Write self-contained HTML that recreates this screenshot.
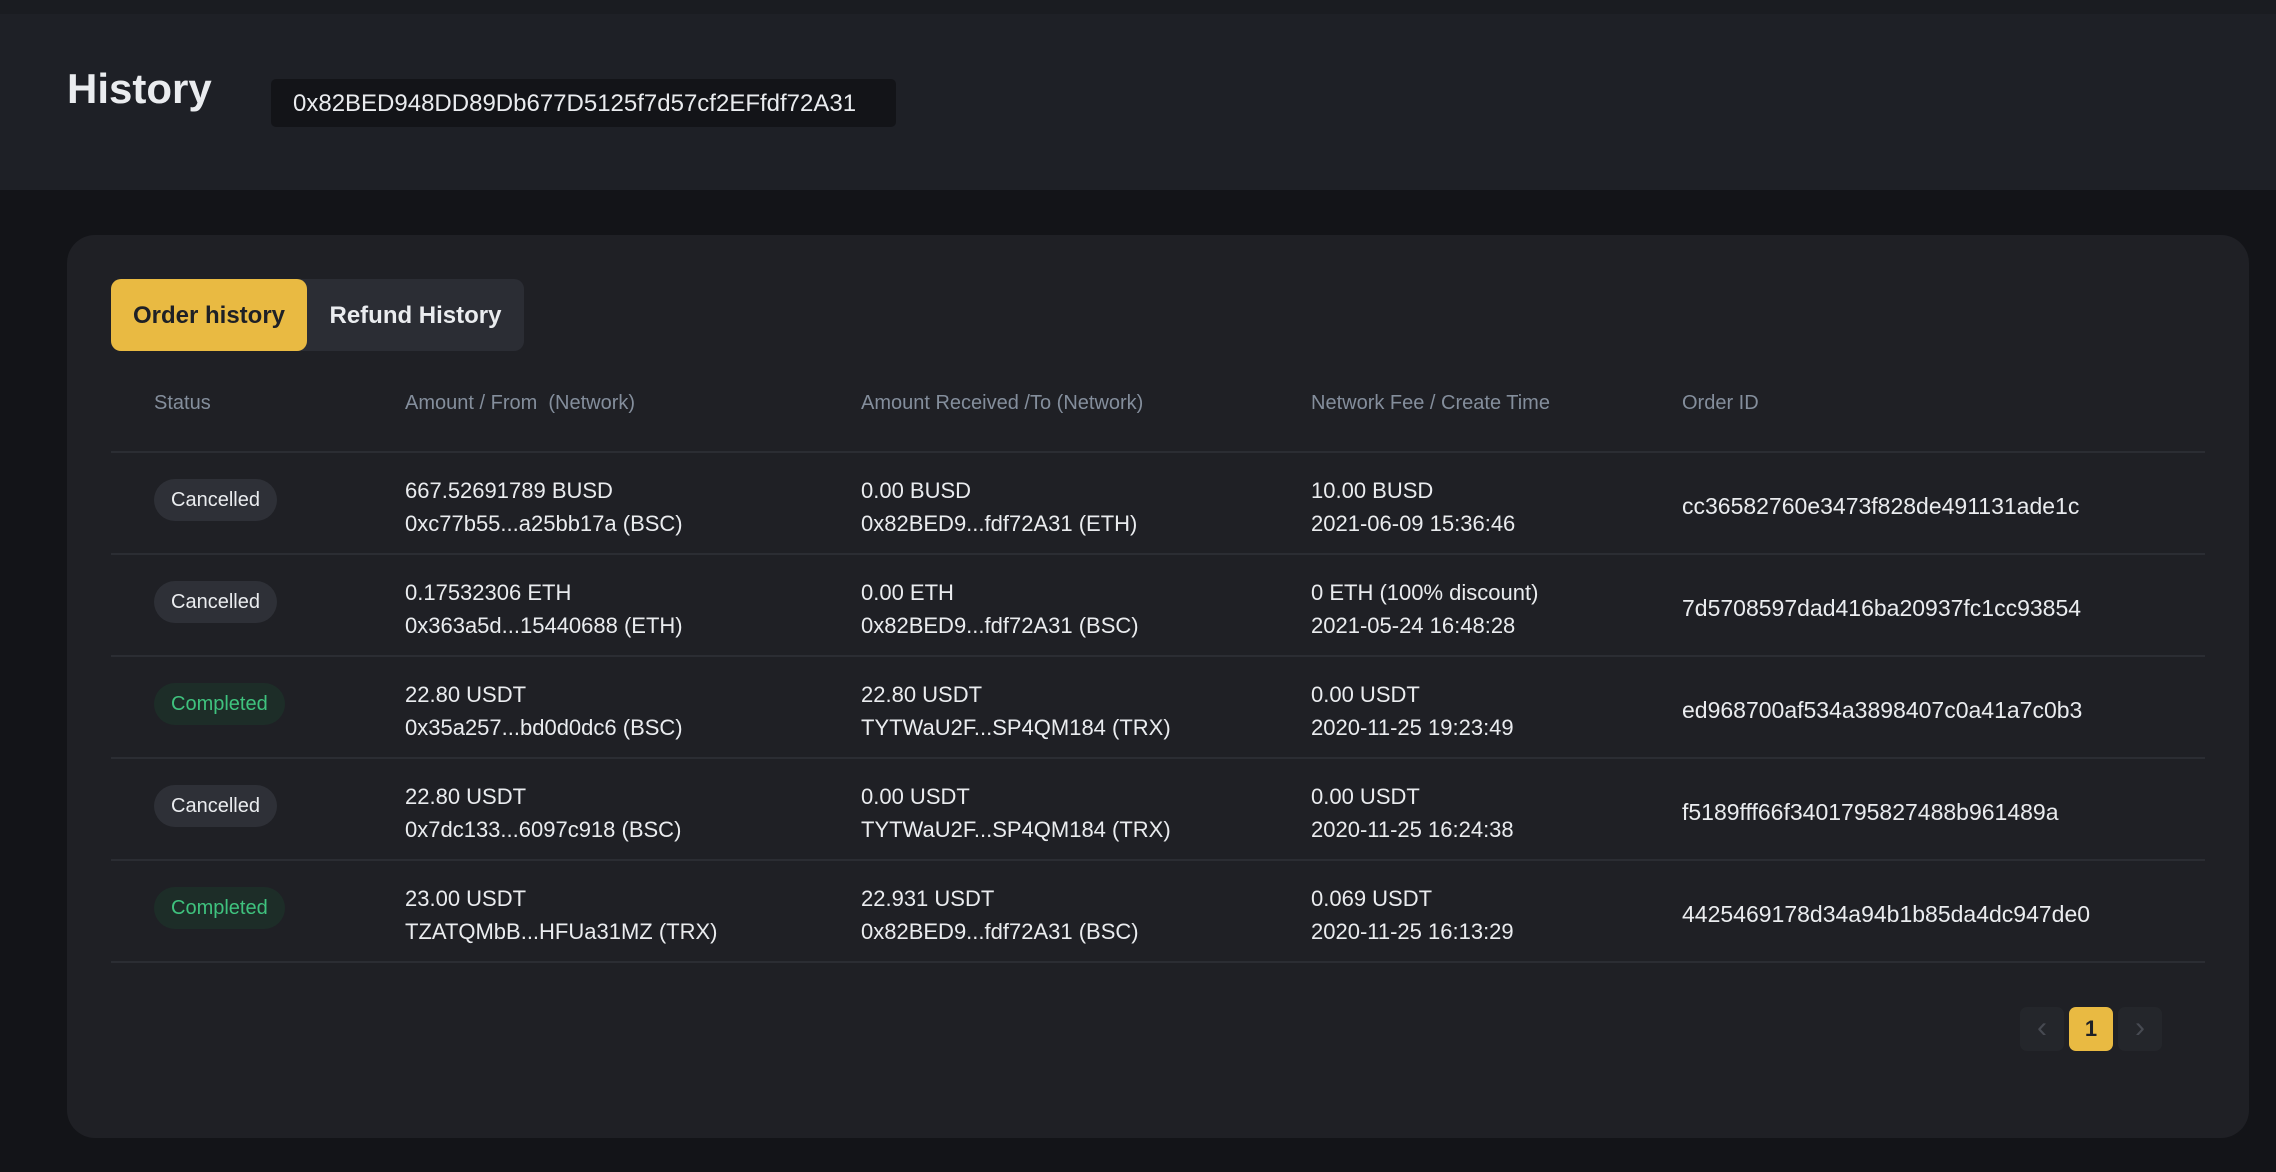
<!DOCTYPE html>
<html><head><meta charset="utf-8">
<style>
*{margin:0;padding:0;box-sizing:border-box}
html,body{width:2276px;height:1172px;background:#131418;font-family:"Liberation Sans",sans-serif;overflow:hidden;position:relative}
.top{position:absolute;left:0;top:0;width:2276px;height:14px;background:#1a1c21}
.hdr{position:absolute;left:0;top:14px;width:2276px;height:176px;background:#1e2026}
.title{position:absolute;left:67px;top:65px;font-size:42px;font-weight:bold;color:#eaecef}
.addr{position:absolute;left:271px;top:79px;width:625px;height:48px;background:#131418;border-radius:5px;color:#eaecef;font-size:24px;line-height:50px;padding-left:22px}
.card{position:absolute;left:67px;top:235px;width:2182px;height:903px;background:#1f2025;border-radius:28px}
.tabs{position:absolute;left:111px;top:279px;width:413px;height:72px;background:#2b2d34;border-radius:10px}
.tab1{position:absolute;left:111px;top:279px;width:196px;height:72px;background:#e9ba42;border-radius:10px;color:#1e2026;font-size:24px;font-weight:bold;line-height:74px;text-align:center}
.tab2{position:absolute;left:307px;top:279px;width:217px;height:72px;color:#eaecef;font-size:24px;font-weight:bold;line-height:74px;text-align:center}
.th{position:absolute;top:392px;font-size:20px;color:#848e9c}
.line{position:absolute;left:111px;width:2094px;height:2px;background:#2b2d33}
.c{position:absolute;font-size:22px;color:#eaecef;line-height:33px;white-space:nowrap}
.b{position:absolute;left:154px;height:42px;border-radius:21px;font-size:20px;line-height:43px;padding:0 17px}
.can{background:#2e3037;color:#eaecef}
.com{background:#1d2d28;color:#3fc27e}
.id{position:absolute;left:1682px;font-size:23px;color:#eaecef;white-space:nowrap}
.pg{position:absolute;top:1007px;width:44px;height:44px;border-radius:7px;background:#24262b;color:#474a52;font-size:30px;line-height:42px;text-align:center}
</style></head><body>
<div class="top"></div>
<div class="hdr"></div>
<div class="title">History</div>
<div class="addr">0x82BED948DD89Db677D5125f7d57cf2EFfdf72A31</div>
<div class="card"></div>
<div class="tabs"></div>
<div class="tab1">Order history</div>
<div class="tab2">Refund History</div>
<div class="th" style="left:154px">Status</div>
<div class="th" style="left:405px">Amount / From &nbsp;(Network)</div>
<div class="th" style="left:861px">Amount Received /To (Network)</div>
<div class="th" style="left:1311px">Network Fee / Create Time</div>
<div class="th" style="left:1682px">Order ID</div>

<div class="line" style="top:451px"></div>
<div class="line" style="top:553px"></div>
<div class="line" style="top:655px"></div>
<div class="line" style="top:757px"></div>
<div class="line" style="top:859px"></div>
<div class="line" style="top:961px"></div>

<div class="b can" style="top:479px">Cancelled</div>
<div class="c" style="left:405px;top:474px">667.52691789 BUSD<br>0xc77b55...a25bb17a (BSC)</div>
<div class="c" style="left:861px;top:474px">0.00 BUSD<br>0x82BED9...fdf72A31 (ETH)</div>
<div class="c" style="left:1311px;top:474px">10.00 BUSD<br>2021-06-09 15:36:46</div>
<div class="id" style="top:493px">cc36582760e3473f828de491131ade1c</div>

<div class="b can" style="top:581px">Cancelled</div>
<div class="c" style="left:405px;top:576px">0.17532306 ETH<br>0x363a5d...15440688 (ETH)</div>
<div class="c" style="left:861px;top:576px">0.00 ETH<br>0x82BED9...fdf72A31 (BSC)</div>
<div class="c" style="left:1311px;top:576px">0 ETH (100% discount)<br>2021-05-24 16:48:28</div>
<div class="id" style="top:595px">7d5708597dad416ba20937fc1cc93854</div>

<div class="b com" style="top:683px">Completed</div>
<div class="c" style="left:405px;top:678px">22.80 USDT<br>0x35a257...bd0d0dc6 (BSC)</div>
<div class="c" style="left:861px;top:678px">22.80 USDT<br>TYTWaU2F...SP4QM184 (TRX)</div>
<div class="c" style="left:1311px;top:678px">0.00 USDT<br>2020-11-25 19:23:49</div>
<div class="id" style="top:697px">ed968700af534a3898407c0a41a7c0b3</div>

<div class="b can" style="top:785px">Cancelled</div>
<div class="c" style="left:405px;top:780px">22.80 USDT<br>0x7dc133...6097c918 (BSC)</div>
<div class="c" style="left:861px;top:780px">0.00 USDT<br>TYTWaU2F...SP4QM184 (TRX)</div>
<div class="c" style="left:1311px;top:780px">0.00 USDT<br>2020-11-25 16:24:38</div>
<div class="id" style="top:799px">f5189fff66f3401795827488b961489a</div>

<div class="b com" style="top:887px">Completed</div>
<div class="c" style="left:405px;top:882px">23.00 USDT<br>TZATQMbB...HFUa31MZ (TRX)</div>
<div class="c" style="left:861px;top:882px">22.931 USDT<br>0x82BED9...fdf72A31 (BSC)</div>
<div class="c" style="left:1311px;top:882px">0.069 USDT<br>2020-11-25 16:13:29</div>
<div class="id" style="top:901px">4425469178d34a94b1b85da4dc947de0</div>

<div class="pg" style="left:2020px">&#8249;</div>
<div class="pg" style="left:2069px;background:#e9ba42;color:#1e2026;font-weight:bold;font-size:22px;line-height:44px">1</div>
<div class="pg" style="left:2118px">&#8250;</div>
</body></html>
